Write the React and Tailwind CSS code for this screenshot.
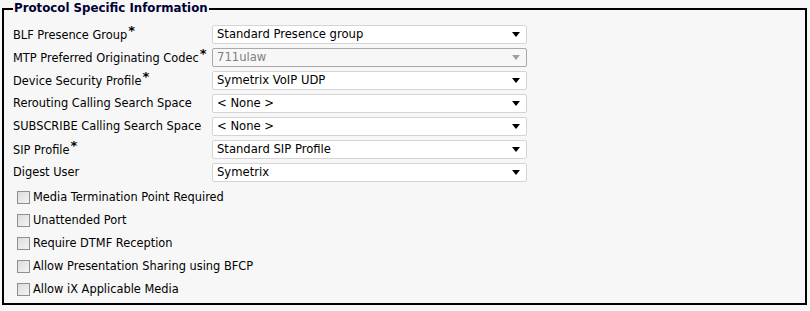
const rows = [
  { label: 'BLF Presence Group', req: true, value: 'Standard Presence group' },
  { label: 'MTP Preferred Originating Codec', req: true, value: '711ulaw', disabled: true },
  { label: 'Device Security Profile', req: true, value: 'Symetrix VoIP UDP' },
  { label: 'Rerouting Calling Search Space', value: '< None >' },
  { label: 'SUBSCRIBE Calling Search Space', value: '< None >' },
  { label: 'SIP Profile', req: true, value: 'Standard SIP Profile' },
  { label: 'Digest User', value: 'Symetrix' },
]

const checks = [
  'Media Termination Point Required',
  'Unattended Port',
  'Require DTMF Reception',
  'Allow Presentation Sharing using BFCP',
  'Allow iX Applicable Media',
]

function Select({ value, disabled }) {
  return (
    <div
      className={`flex h-[19px] w-[315px] items-center justify-between rounded-[2px] border pl-[4px] pr-[4px] text-[11.6px] ${
        disabled ? 'border-[#a9a9a9] bg-[#f7f7f7] text-[#808080]' : 'border-[#d4d4d4] bg-white text-black'
      }`}
    >
      <span>{value}</span>
      <svg width="8" height="5" viewBox="0 0 8 5" className="mr-[2px]">
        <path d="M0 0H8L4 5Z" fill={disabled ? '#a0a0a0' : '#000'} />
      </svg>
    </div>
  )
}

export default function App() {
  return (
    <div
      className="h-[311px] w-[810px] bg-[#f7f7f7] pt-[1px] text-[11.4px] text-black"
      style={{ fontFamily: '"DejaVu Sans", Verdana, sans-serif' }}
    >
      <fieldset className="mx-[2px] h-[304px] w-[805px] border-2 border-black pl-[9px]">
        <legend className="px-[1px] text-[11.8px] font-bold leading-[15px] text-[#000033]">
          Protocol Specific Information
        </legend>

        <div className="mt-[9px] flex flex-col gap-[4px]">
          {rows.map((r) => (
            <div key={r.label} className="flex h-[19px] items-center">
              <div className="w-[199px]">
                {r.label}
                {r.req && <span className="relative -top-[4px] ml-[1px] text-[13px] font-bold">*</span>}
              </div>
              <Select value={r.value} disabled={r.disabled} />
            </div>
          ))}
        </div>

        <div className="mt-[9px] flex flex-col gap-[10px] pl-[4px]">
          {checks.map((c) => (
            <div key={c} className="flex h-[13px] items-center gap-[3px]">
              <div className="h-[13px] w-[13px] border border-[#8f8f8f] bg-gradient-to-br from-[#dcdcdc] to-[#f4f4f4]" />
              <span>{c}</span>
            </div>
          ))}
        </div>
      </fieldset>
    </div>
  )
}
